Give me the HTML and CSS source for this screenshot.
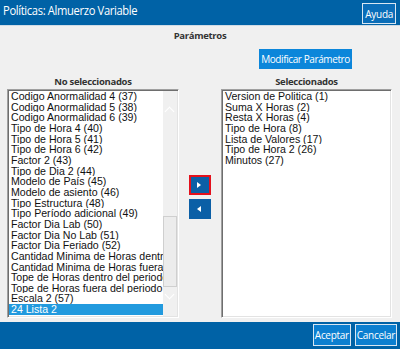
FILE: index.html
```html
<!DOCTYPE html>
<html lang="es">
<head>
    <meta charset="UTF-8">
    <meta name="viewport" content="width=device-width, initial-scale=1.0">
    <title>Políticas: Almuerzo Variable</title>
    <link rel="stylesheet" href="styles.css">
</head>
<body>
    <div class="window">
        <div class="titlebar">
            <span class="title">Políticas: Almuerzo Variable</span>
            <button class="btn-frame">Ayuda</button>
        </div>

        <div class="content">
            <div class="section-title">Parámetros</div>
            <div class="toolbar">
                <button class="btn-modify">Modificar Parámetro</button>
            </div>

            <div class="lists">
                <div class="list-header">No seleccionados</div>
                <div></div>
                <div class="list-header">Seleccionados</div>

                <div class="listbox">
                    <ul class="items">
                        <li>Codigo Anormalidad 4 (37)</li>
                        <li>Codigo Anormalidad 5 (38)</li>
                        <li>Codigo Anormalidad 6 (39)</li>
                        <li>Tipo de Hora 4 (40)</li>
                        <li>Tipo de Hora 5 (41)</li>
                        <li>Tipo de Hora 6 (42)</li>
                        <li>Factor 2 (43)</li>
                        <li>Tipo de Dia 2 (44)</li>
                        <li>Modelo de País (45)</li>
                        <li>Modelo de asiento (46)</li>
                        <li>Tipo Estructura (48)</li>
                        <li>Tipo Período adicional (49)</li>
                        <li>Factor Dia Lab (50)</li>
                        <li>Factor Dia No Lab (51)</li>
                        <li>Factor Dia Feriado (52)</li>
                        <li>Cantidad Minima de Horas dentro de</li>
                        <li>Cantidad Minima de Horas fuera del</li>
                        <li>Tope de Horas dentro del periodo ad</li>
                        <li>Tope de Horas fuera del periodo adic</li>
                        <li>Escala 2 (57)</li>
                        <li class="selected">24 Lista 2</li>
                    </ul>
                    <div class="scrollbar">
                        <span class="chevron up"></span>
                        <span class="thumb"></span>
                        <span class="chevron down"></span>
                    </div>
                </div>

                <div class="movers">
                    <button class="btn-move active"><span class="tri right"></span></button>
                    <button class="btn-move"><span class="tri left"></span></button>
                </div>

                <div class="listbox">
                    <ul class="items">
                        <li>Version de Politica (1)</li>
                        <li>Suma X Horas (2)</li>
                        <li>Resta X Horas (4)</li>
                        <li>Tipo de Hora (8)</li>
                        <li>Lista de Valores (17)</li>
                        <li>Tipo de Hora 2 (26)</li>
                        <li>Minutos (27)</li>
                    </ul>
                </div>
            </div>
        </div>

        <div class="footer">
            <button class="btn-frame">Aceptar</button>
            <button class="btn-frame">Cancelar</button>
        </div>
    </div>
</body>
</html>
```

FILE: styles.css
```css
body {
    margin: 0;
    padding: 0;
    font-family: 'Open Sans', 'Noto Sans', sans-serif;
    background: #f0f0f0;
    overflow: hidden;
}

.window {
    width: 400px;
    height: 349px;
    display: flex;
    flex-direction: column;
}

.titlebar {
    height: 25px;
    background-color: #0062a6;
    border-bottom: 1px solid #cfdbe6;
    display: flex;
    justify-content: space-between;
    align-items: flex-start;
    padding: 0 4px 0 3px;
}

.title {
    color: #fff;
    font-family: 'Open Sans', sans-serif;
    font-size: 13px;
    letter-spacing: -0.4px;
    line-height: 21px;
    transform: scaleX(0.86);
    transform-origin: left center;
}

.btn-frame {
    font-family: inherit;
    font-size: 10px;
    color: #fff;
    background-color: #0a6db8;
    border: 1px solid #d8e6f2;
    padding: 0 2px;
    height: 21px;
    margin-top: 3px;
    letter-spacing: -0.3px;
    white-space: nowrap;
}

.content {
    flex: 1;
    display: flex;
    flex-direction: column;
}

.section-title {
    margin-top: 3px;
    text-align: center;
    font-size: 9.5px;
    font-weight: bold;
    line-height: 14px;
    color: #333;
    letter-spacing: -0.3px;
}

.toolbar {
    display: flex;
    justify-content: flex-end;
    padding-right: 48px;
    margin-top: 6px;
}

.btn-modify {
    font-family: inherit;
    font-size: 10px;
    color: #fff;
    background-color: #0c86da;
    border: none;
    width: 93px;
    height: 20px;
    padding: 0;
    letter-spacing: -0.4px;
    white-space: nowrap;
}

.lists {
    display: grid;
    grid-template-columns: 172px 42px 171px;
    grid-template-rows: 12px 229px;
    row-gap: 1px;
    padding-left: 7px;
    margin-top: 7px;
}

.list-header {
    text-align: center;
    font-size: 9.5px;
    font-weight: bold;
    line-height: 12px;
    color: #333;
    letter-spacing: -0.3px;
}

.listbox {
    background: #fff;
    border: 1px solid;
    border-color: #a0a0a0 #fff #fff #a0a0a0;
    box-shadow: inset 1px 1px 0 #6e6e6e, inset -1px -1px 0 #e3e3e3;
    padding: 1px;
    display: flex;
    overflow: hidden;
}

.items {
    list-style: none;
    margin: 0;
    padding: 0;
    flex: 1;
    min-width: 0;
    font-family: 'Liberation Sans', Arial, sans-serif;
    font-size: 10.6px;
    line-height: 10.65px;
    color: #111;
}

.items li {
    white-space: nowrap;
    overflow: hidden;
    padding-left: 2px;
}

.items li.selected {
    background-color: #229ade;
    color: #fff;
}

.scrollbar {
    width: 14px;
    background: #f0f0f0;
    position: relative;
}

.chevron {
    position: absolute;
    left: 3px;
    width: 6px;
    height: 6px;
    border-left: 1.5px solid #fff;
    border-top: 1.5px solid #fff;
}

.chevron.up {
    top: 17px;
    transform: rotate(45deg);
}

.chevron.down {
    top: 200px;
    transform: rotate(225deg);
}

.thumb {
    position: absolute;
    left: 0;
    top: 125px;
    width: 12px;
    height: 69px;
    border: 1px solid #cfcfcf;
    background: #ececec;
}

.movers {
    display: flex;
    flex-direction: column;
    align-items: center;
    padding-top: 86px;
    gap: 4px;
}

.btn-move {
    width: 22px;
    height: 20px;
    padding: 0;
    border: none;
    background-color: #0b5fa6;
    display: flex;
    align-items: center;
    justify-content: center;
}

.btn-move.active {
    border: 2px solid #e3101c;
}

.tri {
    width: 0;
    height: 0;
    border-top: 3px solid transparent;
    border-bottom: 3px solid transparent;
}

.tri.right {
    border-left: 4px solid #fff;
    margin-left: -2px;
}

.tri.left {
    border-right: 4px solid #fff;
    margin-left: -2px;
}

.footer {
    height: 27px;
    background-color: #0062a6;
    display: flex;
    justify-content: flex-end;
    gap: 4px;
    padding-right: 3px;
}

.footer .btn-frame {
    margin-top: 2px;
    height: 22px;
    background-color: #0c7fd0;
    padding: 0 1px;
}
```
